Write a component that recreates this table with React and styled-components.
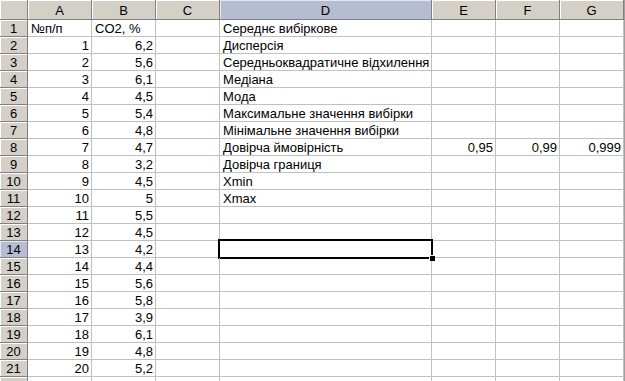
import React from "react";
import styled, { createGlobalStyle, css } from "styled-components";

const GlobalStyle = createGlobalStyle`
  html, body { margin: 0; padding: 0; background: #ffffff; overflow: hidden; }
  body { font-family: Arial, "Liberation Sans", sans-serif; }
`;

const COLS = [
  { key: "A", width: 64 },
  { key: "B", width: 64 },
  { key: "C", width: 64 },
  { key: "D", width: 212 },
  { key: "E", width: 64 },
  { key: "F", width: 64 },
  { key: "G", width: 64 },
];

const ACTIVE_COL = "D";
const ACTIVE_ROW = 14;

const Sheet = styled.div`
  display: grid;
  grid-template-columns: 28px ${COLS.map((c) => `${c.width}px`).join(" ")};
  grid-template-rows: 20px;
  grid-auto-rows: 17px;
  width: 625px;
  border-right: 1px solid #a0a0a0;
  box-sizing: border-box;
  font-family: Arial, "Liberation Sans", sans-serif;
  font-size: 13px;
  color: #000;
`;

const headerBase = css`
  background: #d4d0c8;
  border-right: 1px solid #808080;
  border-bottom: 1px solid #808080;
  box-shadow: inset 1px 1px 0 #ffffff;
  box-sizing: border-box;
  display: flex;
  align-items: center;
  justify-content: center;
  font-size: 13px;
  color: #000;
`;

const activeHeader = css`
  background: #b6bdd2;
  box-shadow: inset 1px 1px 0 #e4e8f2;
`;

const Corner = styled.div`
  ${headerBase}
`;

const ColHeader = styled.div`
  ${headerBase}
  padding-top: 1px;
  ${(p) => p.$active && activeHeader}
`;

const RowHeader = styled.div`
  ${headerBase}
  padding-top: 1px;
  ${(p) => p.$active && activeHeader}
`;

const Cell = styled.div`
  position: relative;
  box-sizing: border-box;
  border-right: 1px solid #c0c0c0;
  border-bottom: 1px solid #c0c0c0;
  padding: 1px 2px 0 3px;
  display: flex;
  align-items: center;
  justify-content: ${(p) => (p.$num ? "flex-end" : "flex-start")};
  white-space: nowrap;
  overflow: visible;
  line-height: 16px;
  ${(p) =>
    p.$selected &&
    css`
      &::after {
        content: "";
        position: absolute;
        left: -2px;
        top: -2px;
        right: -2px;
        bottom: -2px;
        border: 2px solid #000;
        pointer-events: none;
      }
      &::before {
        content: "";
        position: absolute;
        right: -4px;
        bottom: -4px;
        width: 5px;
        height: 5px;
        background: #000;
        border-left: 1px solid #fff;
        border-top: 1px solid #fff;
        z-index: 2;
      }
    `}
`;

const co2 = [6.2, 5.6, 6.1, 4.5, 5.4, 4.8, 4.7, 3.2, 4.5, 5, 5.5, 4.5, 4.2, 4.4, 5.6, 5.8, 3.9, 6.1, 4.8, 5.2];

const labels = [
  "Середнє вибіркове",
  "Дисперсія",
  "Середньоквадратичне відхилення",
  "Медіана",
  "Мода",
  "Максимальне значення вибірки",
  "Мінімальне значення вибірки",
  "Довірча ймовірність",
  "Довірча границя",
  "Xmin",
  "Xmax",
];

const fmt = (n) => String(n).replace(".", ",");

function buildRows() {
  const rows = [];
  rows.push({ A: "№п/п", B: "CO2, %" });
  co2.forEach((v, i) => {
    rows.push({ A: { v: i + 1, num: true }, B: { v: fmt(v), num: true } });
  });
  rows.push({});
  labels.forEach((l, i) => {
    rows[i].D = l;
  });
  rows[7].E = { v: "0,95", num: true };
  rows[7].F = { v: "0,99", num: true };
  rows[7].G = { v: "0,999", num: true };
  return rows;
}

export default function App() {
  const rows = buildRows();
  return (
    <>
      <GlobalStyle />
      <Sheet>
        <Corner />
        {COLS.map((c) => (
          <ColHeader key={c.key} $active={c.key === ACTIVE_COL}>
            {c.key}
          </ColHeader>
        ))}
        {rows.map((row, ri) => {
          const n = ri + 1;
          return (
            <React.Fragment key={n}>
              <RowHeader $active={n === ACTIVE_ROW}>{n}</RowHeader>
              {COLS.map((c) => {
                const raw = row[c.key];
                const val = raw && typeof raw === "object" ? raw : { v: raw };
                return (
                  <Cell
                    key={c.key}
                    $num={val.num}
                    $selected={c.key === ACTIVE_COL && n === ACTIVE_ROW}
                  >
                    {val.v}
                  </Cell>
                );
              })}
            </React.Fragment>
          );
        })}
      </Sheet>
    </>
  );
}
